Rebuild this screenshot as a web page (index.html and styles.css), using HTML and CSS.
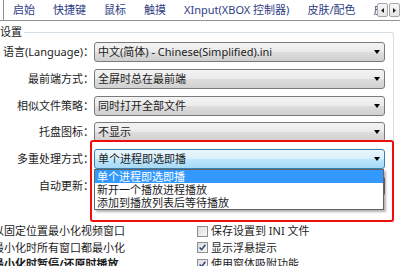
FILE: index.html
```html
<!DOCTYPE html>
<html lang="zh-CN">
<head>
<meta charset="utf-8">
<title>设置</title>
<link rel="stylesheet" href="styles.css">
</head>
<body>
<div class="tabbar">
  <div class="tab-stub"></div>
  <div class="tabs">
    <span class="tab">启始</span>
    <span class="tab">快捷键</span>
    <span class="tab">鼠标</span>
    <span class="tab">触摸</span>
    <span class="tab">XInput(XBOX 控制器)</span>
    <span class="tab">皮肤/配色</span>
    <span class="tab">皮肤/图标</span>
  </div>
  <div class="tab-scroll">
    <span class="scroll-btn"><svg width="3" height="5" viewBox="0 0 3 5"><path d="M3 0V5L0 2.5Z" fill="#222"/></svg></span>
    <span class="scroll-btn"><svg width="3" height="5" viewBox="0 0 3 5"><path d="M0 0V5L3 2.5Z" fill="#222"/></svg></span>
  </div>
</div>

<div class="group">
  <div class="legend">设置</div>
  <div class="rows">
    <span class="label">语言(Language)：</span>
    <div class="combo"><span>中文(简体) - Chinese(Simplified).ini</span><i class="arrow"></i></div>

    <span class="label">最前端方式：</span>
    <div class="combo"><span>全屏时总在最前端</span><i class="arrow"></i></div>

    <span class="label">相似文件策略：</span>
    <div class="combo"><span>同时打开全部文件</span><i class="arrow"></i></div>

    <span class="label">托盘图标：</span>
    <div class="combo"><span>不显示</span><i class="arrow"></i></div>

    <span class="label">多重处理方式：</span>
    <div class="combo-wrap">
      <div class="combo active"><span>单个进程即选即播</span><i class="arrow"></i></div>
      <ul class="dropdown">
        <li class="selected">单个进程即选即播</li>
        <li>新开一个播放进程播放</li>
        <li>添加到播放列表后等待播放</li>
      </ul>
      <div class="highlight"></div>
    </div>

    <span class="label">自动更新：</span>
    <div class="combo"><span></span><i class="arrow"></i></div>
  </div>
</div>

<div class="checks">
  <div class="check"><span class="box"></span><span>以固定位置最小化视频窗口</span></div>
  <div class="check"><span class="box"></span><span>保存设置到 INI 文件</span></div>
  <div class="check"><span class="box"></span><span>最小化时所有窗口都最小化</span></div>
  <div class="check"><span class="box checked"><svg width="9" height="9" viewBox="0 0 9 9"><path d="M1.6 4.4L3.6 6.6L7.4 1.8" fill="none" stroke="#2c4383" stroke-width="1.5"/></svg></span><span>显示浮悬提示</span></div>
  <div class="check bold"><span class="box"></span><span>最小化时暂停/还原时播放</span></div>
  <div class="check"><span class="box checked"><svg width="9" height="9" viewBox="0 0 9 9"><path d="M1.6 4.4L3.6 6.6L7.4 1.8" fill="none" stroke="#2c4383" stroke-width="1.5"/></svg></span><span>使用窗体吸附功能</span></div>
</div>
</body>
</html>
```

FILE: styles.css
```css
html, body {
  margin: 0;
  padding: 0;
}
body {
  width: 400px;
  height: 266px;
  overflow: hidden;
  background: #ffffff;
  font-family: "Noto Sans", "Noto Sans CJK SC", sans-serif;
  font-size: 11px;
  line-height: 14px;
  color: #1c1c1c;
}

/* ---------- tab strip ---------- */
.tabbar {
  display: flex;
  height: 20px;
  border-bottom: 1px solid #8e9196;
}
.tab-stub {
  width: 3px;
  flex: none;
  border-right: 1px solid #8e9196;
}
.tabs {
  flex: 1;
  min-width: 0;
  display: flex;
  overflow: hidden;
}
.tab {
  flex: none;
  padding: 3px 9px 0;
  white-space: nowrap;
  color: #2f3d86;
}
.tab-scroll {
  flex: none;
  display: flex;
  gap: 1px;
  padding-top: 3px;
}
.scroll-btn {
  width: 11px;
  height: 14px;
  box-sizing: border-box;
  border: 1px solid #a3a6ab;
  border-radius: 2px;
  background: linear-gradient(#f7f7f7, #e4e4e4);
  display: flex;
  align-items: center;
  justify-content: center;
}
.scroll-btn svg { display: block; }

/* ---------- group box ---------- */
.group {
  margin: 11px 6px 0 -14px;
  height: 190px;
  border-top: 1px solid #d5dfe5;
  border-right: 1px solid #d5dfe5;
  border-top-right-radius: 3px;
}
.legend {
  width: max-content;
  margin: -8px 0 0 12px;
  padding: 0 2px;
  background: #ffffff;
  color: #1c1c1c;
}
.rows {
  margin-top: 3px;
  display: grid;
  grid-template-columns: 108px 291px;
  grid-auto-rows: 20px;
  row-gap: 6.75px;
  align-items: center;
}
.label {
  text-align: right;
  white-space: nowrap;
}
.combo {
  height: 20px;
  box-sizing: border-box;
  border: 1px solid #7a7a7a;
  border-radius: 3px;
  background: linear-gradient(#f3f3f3, #ebebeb 48%, #dddddd 52%, #d0d0d0);
  display: flex;
  align-items: center;
  justify-content: space-between;
  padding: 0 3px 0 3px;
  white-space: nowrap;
}
.combo.active {
  border-color: #3c7fb1;
  background: linear-gradient(#eaf6fd, #d9f0fc 48%, #bee6fd 52%, #a7d9f5);
}
.arrow {
  width: 0;
  height: 0;
  border-left: 3.5px solid transparent;
  border-right: 3.5px solid transparent;
  border-top: 4px solid #000000;
  margin-right: 1px;
}
.combo-wrap {
  position: relative;
  height: 20px;
}
.dropdown {
  position: absolute;
  top: 100%;
  left: 0;
  width: 290px;
  box-sizing: border-box;
  margin: 0;
  padding: 0;
  list-style: none;
  background: #ffffff;
  border: 1px solid #646464;
  box-shadow: 2px 2px 2px rgba(0, 0, 0, 0.3);
  z-index: 2;
}
.dropdown li {
  height: 13px;
  line-height: 13px;
  padding-left: 2px;
  white-space: nowrap;
}
.dropdown li.selected {
  background: #3399ff;
  color: #ffffff;
}
.highlight {
  position: absolute;
  left: -4px;
  top: -9px;
  width: 304px;
  height: 82px;
  box-sizing: border-box;
  border: 2.5px solid #f20d0d;
  border-radius: 3px;
  z-index: 3;
  pointer-events: none;
}

/* ---------- checkboxes ---------- */
.checks {
  margin: 0 0 0 -21px;
  display: grid;
  grid-template-columns: 218px 1fr;
  grid-auto-rows: 16.5px;
  align-items: center;
}
.check {
  display: flex;
  align-items: center;
  gap: 3px;
  white-space: nowrap;
}
.check.bold { font-weight: bold; }
.box {
  width: 11px;
  height: 11px;
  flex: none;
  box-sizing: border-box;
  border: 1px solid #8f8f8f;
  background: linear-gradient(135deg, #dcdcdc, #f8f8f8);
  display: flex;
  align-items: center;
  justify-content: center;
}
.box svg { display: block; }
```
